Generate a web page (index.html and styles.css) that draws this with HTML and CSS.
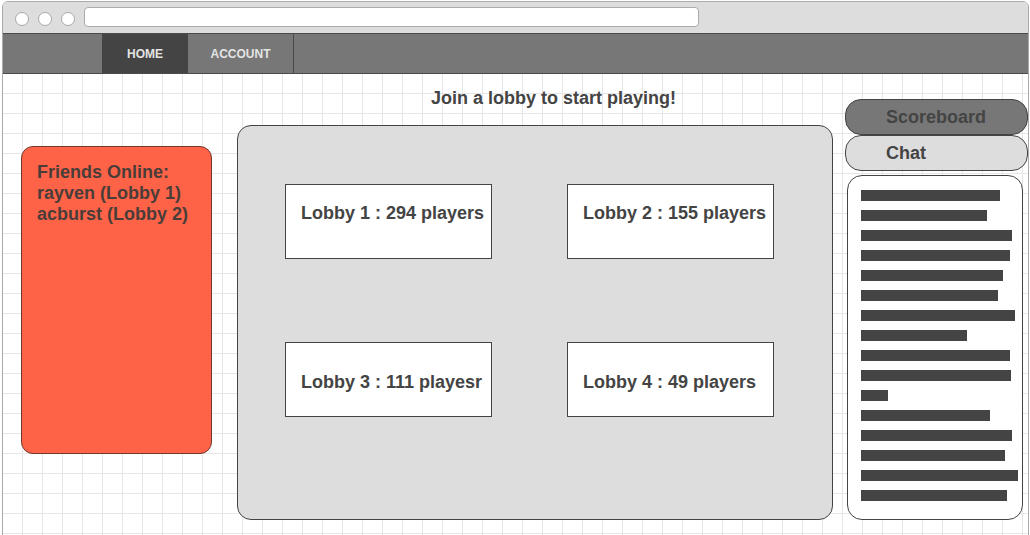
FILE: index.html
```html
<!DOCTYPE html>
<html>
<head>
<meta charset="utf-8">
<link rel="stylesheet" href="styles.css">
</head>
<body>
<div class="frame">
  <div class="chrome">
    <span class="dot"></span><span class="dot"></span><span class="dot"></span>
    <div class="address"></div>
  </div>
  <nav class="nav">
    <a class="tab tab-active">HOME</a>
    <a class="tab tab-account">ACCOUNT</a>
  </nav>
  <main class="main">
    <section class="friends">
      <div>Friends Online:</div>
      <div>rayven (Lobby 1)</div>
      <div>acburst (Lobby 2)</div>
    </section>
    <section class="center">
      <h1 class="title">Join a lobby to start playing!</h1>
      <div class="lobbies">
        <div class="lobby">Lobby 1 : 294 players</div>
        <div class="lobby">Lobby 2 : 155 players</div>
        <div class="lobby lobby-low">Lobby 3 : 111 playesr</div>
        <div class="lobby lobby-low">Lobby 4 : 49 players</div>
      </div>
    </section>
    <aside class="side">
      <div class="pill pill-dark">Scoreboard</div>
      <div class="pill pill-light">Chat</div>
      <div class="chat">
        <div class="bar" style="width:139px"></div>
        <div class="bar" style="width:126px"></div>
        <div class="bar" style="width:151px"></div>
        <div class="bar" style="width:149px"></div>
        <div class="bar" style="width:142px"></div>
        <div class="bar" style="width:137px"></div>
        <div class="bar" style="width:154px"></div>
        <div class="bar" style="width:106px"></div>
        <div class="bar" style="width:149px"></div>
        <div class="bar" style="width:150px"></div>
        <div class="bar" style="width:27px"></div>
        <div class="bar" style="width:129px"></div>
        <div class="bar" style="width:151px"></div>
        <div class="bar" style="width:144px"></div>
        <div class="bar" style="width:157px"></div>
        <div class="bar" style="width:146px"></div>
      </div>
    </aside>
  </main>
</div>
</body>
</html>
```
FILE: styles.css
```css
* { box-sizing: border-box; }
html, body {
  margin: 0;
  padding: 0;
  width: 1030px;
  height: 535px;
  overflow: hidden;
  background: #ffffff;
  font-family: "Liberation Sans", Arial, sans-serif;
}
.frame {
  margin: 1px 0 0 2px;
  width: 1027px;
  height: 560px;
  border: 1px solid #aaaaaa;
  border-radius: 6px 6px 0 0;
  overflow: hidden;
  display: flex;
  flex-direction: column;
}
.chrome {
  height: 31px;
  background: #dddddd;
  display: flex;
  align-items: center;
  padding: 2px 0 0 12px;
  gap: 9px;
  flex: none;
}
.dot {
  width: 14px;
  height: 14px;
  border-radius: 50%;
  background: #ffffff;
  border: 1px solid #a8a8a8;
  flex: none;
}
.address {
  width: 615px;
  height: 20px;
  margin-top: -3px;
  background: #ffffff;
  border: 1px solid #aaaaaa;
  border-radius: 4px;
}
.nav {
  height: 41px;
  flex: none;
  background: #777777;
  border-top: 1px solid #4a4a4a;
  border-bottom: 1px solid #4a4a4a;
  display: flex;
  padding-left: 99px;
}
.tab {
  display: flex;
  align-items: center;
  justify-content: center;
  font-size: 12px;
  font-weight: bold;
  color: #e4e4e4;
}
.tab-active {
  width: 86px;
  background: #444444;
}
.tab-account {
  width: 106px;
  border-right: 1px solid #4a4a4a;
}
.main {
  flex: 1;
  display: flex;
  align-items: flex-start;
  padding-left: 18px;
  background-color: #ffffff;
  background-image:
    linear-gradient(to right, #e6e6e6 1px, transparent 1px),
    linear-gradient(to bottom, #e6e6e6 1px, transparent 1px);
  background-size: 20px 20px;
  background-position: 19px -1px;
}
.friends {
  margin-top: 72px;
  width: 191px;
  height: 308px;
  background: #ff6347;
  border: 1px solid #6e3a2c;
  border-radius: 12px;
  padding: 15px 0 0 15px;
  font-size: 18px;
  font-weight: bold;
  line-height: 21px;
  color: #4a3d39;
}
.center {
  margin-left: 25px;
  width: 596px;
  flex: none;
}
.title {
  margin: 14px 0 16px 0;
  padding-left: 194px;
  font-size: 18px;
  line-height: 21px;
  font-weight: bold;
  color: #444444;
}
.lobbies {
  height: 395px;
  background: #dddddd;
  border: 1px solid #444444;
  border-radius: 14px;
  padding: 58px 0 0 47px;
  display: grid;
  grid-template-columns: 207px 207px;
  grid-template-rows: 75px 75px;
  column-gap: 75px;
  row-gap: 83px;
  align-content: start;
}
.lobby {
  background: #ffffff;
  border: 1px solid #444444;
  padding: 18px 0 0 15px;
  font-size: 18px;
  font-weight: bold;
  line-height: 21px;
  color: #444444;
  white-space: nowrap;
}
.lobby-low {
  padding-top: 29px;
}
.side {
  margin-left: 12px;
  margin-top: 25px;
  width: 183px;
  flex: none;
}
.pill {
  height: 36px;
  border: 1px solid #444444;
  border-radius: 16px;
  padding-left: 40px;
  display: flex;
  align-items: center;
  font-size: 18px;
  font-weight: bold;
  color: #444444;
}
.pill-dark { background: #777777; }
.pill-light { background: #dddddd; }
.chat {
  margin: 4px 0 0 2px;
  width: 176px;
  height: 345px;
  background: #ffffff;
  border: 1px solid #444444;
  border-radius: 15px;
  padding: 14px 0 0 13px;
}
.bar {
  height: 11px;
  background: #444444;
  margin-bottom: 9px;
}
```
